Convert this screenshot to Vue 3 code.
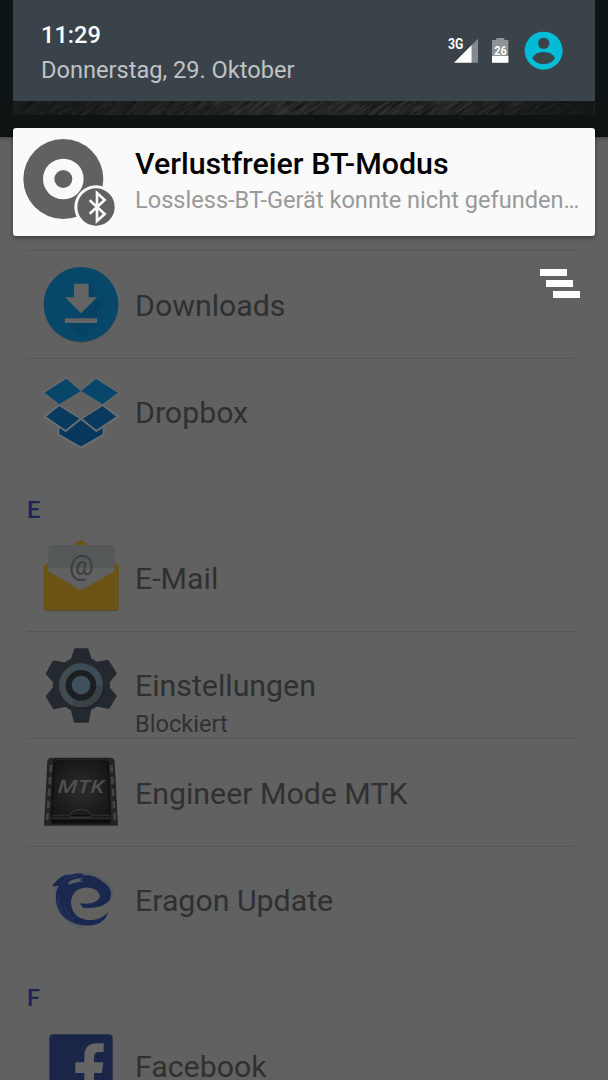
<script setup>
import { ref } from 'vue'

const time = ref('11:29')
const date = ref('Donnerstag, 29. Oktober')

const notification = {
  title: 'Verlustfreier BT-Modus',
  text: 'Lossless-BT-Gerät konnte nicht gefunden werden'
}

const sections = [
  {
    letter: '',
    apps: [
      { name: 'Downloads', icon: 'downloads' },
      { name: 'Dropbox', icon: 'dropbox' }
    ]
  },
  {
    letter: 'E',
    apps: [
      { name: 'E-Mail', icon: 'mail' },
      { name: 'Einstellungen', icon: 'settings', note: 'Blockiert' },
      { name: 'Engineer Mode MTK', icon: 'mtk' },
      { name: 'Eragon Update', icon: 'eragon' }
    ]
  },
  {
    letter: 'F',
    apps: [{ name: 'Facebook', icon: 'facebook' }]
  }
]
</script>

<template>
  <div class="screen">
    <div class="app-bar"></div>

    <main class="app-list">
      <section v-for="section in sections" :key="section.letter" class="section">
        <h2 v-if="section.letter" class="letter">{{ section.letter }}</h2>
        <div v-for="app in section.apps" :key="app.name" class="row">
          <svg v-if="app.icon === 'downloads'" class="app-icon" viewBox="60 30 240 240">
            <circle cx="183" cy="151" r="112" fill="#4b4e50" />
            <circle cx="183" cy="148" r="112" fill="#07476a" />
            <path d="M207 86 229 108 229 127 247 145 231 161 231 190 231 204 190 245 135 204 184 175Z" fill="#074264" />
            <path d="M162 86H206V127H231L183 175 135 127H162ZM135 190H231V204H135Z" fill="#646464" />
          </svg>

          <svg v-else-if="app.icon === 'dropbox'" class="app-icon" viewBox="60 23 240 240">
            <g stroke="#6c6e70" stroke-width="6" stroke-linejoin="round">
              <path d="M115 180 183 150 251 180V208L183 247 115 208Z" fill="#08375d" />
              <path d="M139 40 183 77 118 117 73 82ZM228 40 294 82 248 117 183 77Z" fill="#08466a" />
              <path d="M118 119 183 160 137 197 73 154ZM248 119 294 154 229 197 183 160Z" fill="#083a5f" />
            </g>
            <path d="M139 40 183 77 118 117 73 82ZM228 40 294 82 248 117 183 77Z" fill="#08466a" />
            <path d="M183 79 247 118 183 158 119 118Z" fill="#616161" />
          </svg>

          <svg v-else-if="app.icon === 'mail'" class="app-icon" viewBox="60 144 240 240">
            <path d="M71 230H296V354Q296 364 286 364H81Q71 364 71 354Z" fill="#4d4b45" />
            <path d="M157 168 176 153Q183 148 190 153L210 168 288 222Q296 226 296 232V351Q296 361 286 361H81Q71 361 71 351V232Q71 226 79 222Z" fill="#6b5316" />
            <path d="M85 177Q85 165 97 165H271Q283 165 283 177V244L183 301 85 244Z" fill="#545858" />
            <path d="M85 234H283V244L183 301 85 244Z" fill="#616161" />
            <text x="147" y="256" textLength="74" lengthAdjust="spacingAndGlyphs" class="at">@</text>
          </svg>

          <svg v-else-if="app.icon === 'settings'" class="app-icon" viewBox="60 33 240 240">
            <path class="gear-shadow" d="M165 42H203L212 74 231 84 266 78 290 118 269 142V160L290 183 267 222 231 214 212 226 206 264H162L153 226 137 215 101 222 78 184 101 158V142L78 118 99 80 134 85 153 75Z" />
            <path class="gear" d="M165 42H203L212 72 231 83 264 77 288 115 267 140V159L288 183 266 219 231 212 211 223 204 260H164L155 224 137 213 101 220 80 184 101 158V140L80 116 100 79 135 85 155 73Z" />
            <circle cx="187" cy="155" r="66" fill="#1f2327" />
            <circle cx="183" cy="151" r="66" fill="#414b50" />
            <path d="M183 151 150 94A66 66 0 0 1 249 151Z" fill="#3d4d58" />
            <path d="M183 151 249 151A66 66 0 0 1 155 210Z" fill="#3b4245" />
            <circle cx="183" cy="151" r="46" fill="#1c1f22" />
            <circle cx="183" cy="150" r="28" fill="#3e515c" />
          </svg>

          <svg v-else-if="app.icon === 'mtk'" class="app-icon" viewBox="60 24 240 240">
            <defs>
              <radialGradient id="lid" cx=".5" cy=".55" r=".7">
                <stop offset="0" stop-color="#2c2c2c" />
                <stop offset="1" stop-color="#121212" />
              </radialGradient>
            </defs>
            <path d="M82 48Q84 38 96 38H270Q282 38 284 48L294 242H72Z" fill="#242424" />
            <path d="M93 60 81 236M274 60 285 236" stroke="#444" stroke-width="8" stroke-dasharray="22 14" fill="none" />
            <path d="M102 54Q102 41 115 41H251Q263 41 264 54L270 212H95Z" fill="url(#lid)" stroke="#0d0d0d" stroke-width="4" />
            <path d="M106 50Q107 42 116 42H250Q259 42 261 50" stroke="#404040" stroke-width="2" fill="none" />
            <path d="M94 213H272V238H94Z" fill="#171717" />
            <path d="M96 211H149Q155 194 182 193 207 194 214 211H270M96 219H270M149 211Q152 217 160 217H204Q211 217 214 211" stroke="#454545" stroke-width="2" fill="none" />
            <path d="M94 229H272" stroke="#0c0c0c" stroke-width="8" />
            <text x="112" y="143" textLength="140" lengthAdjust="spacingAndGlyphs" class="mtk">MTK</text>
          </svg>

          <svg v-else-if="app.icon === 'eragon'" class="app-icon" viewBox="60 18 240 240">
            <path d="M102 84C130 48 222 36 266 84 284 110 286 130 264 142L240 100 160 84 140 140 190 222C150 218 100 180 104 112Z" fill="#565b60" />
            <path d="M96 94C112 70 130 60 146 57L138 64C160 54 180 54 194 57L184 62C210 58 232 66 244 78 262 88 272 100 272 112 276 134 262 146 246 152 228 159 206 159 190 159L179 145C214 150 237 140 240 124 238 102 206 90 178 102 144 118 147 165 174 185 205 203 246 196 264 170 258 206 216 218 180 209 130 200 105 165 108 118Q110 102 117 93Z" fill="#1a2850" />
            <path d="M146 82C156 72 176 69 190 70L178 76 194 79C178 80 160 84 146 90Z" fill="#5a5d62" />
            <path d="M122 84C140 68 158 64 172 65M114 120C112 155 130 186 160 201M134 150C138 170 148 184 162 193" stroke="#3a4462" stroke-width="2" fill="none" />
          </svg>

          <svg v-else class="app-icon" viewBox="60 138 240 240">
            <rect x="88" y="163" width="190" height="210" rx="12" fill="#1b2548" />
            <path d="M193 373V279H166V247H193V229Q193 190 231 190H251V216H238Q222 216 222 232V247H250L246 279H222V373Z" fill="#656565" />
          </svg>

          <div class="labels">
            <div class="name">{{ app.name }}</div>
            <div v-if="app.note" class="note">{{ app.note }}</div>
          </div>
        </div>
      </section>
    </main>

    <div class="shade">
      <header class="status">
        <div class="clock">
          <div class="time">{{ time }}</div>
          <div class="date">{{ date }}</div>
        </div>
        <svg class="signal" viewBox="81 93 99 117">
          <path d="M155 135 174 116V188H155Z" fill="#84898d" />
          <path d="M102 188 155 135V188Z" fill="#fff" />
          <text x="84" y="148" textLength="46" lengthAdjust="spacingAndGlyphs" class="net">3G</text>
        </svg>
        <svg class="battery" viewBox="210 93 60 117">
          <path d="M229 114H253V120H265V188H216V120H229Z" fill="#8f9396" />
          <path d="M216 168H265V188H216Z" fill="#fff" />
          <text x="223" y="165" textLength="37" lengthAdjust="spacingAndGlyphs" class="level">26</text>
        </svg>
        <svg class="avatar" viewBox="312 93 120 117">
          <circle cx="371" cy="152" r="57" fill="#00bcd4" />
          <circle cx="371" cy="130" r="17" fill="#3b434a" />
          <path d="M337 174Q346 156 371 156T405 174Q395 192 371 192T337 174Z" fill="#3b434a" />
        </svg>
      </header>

      <svg class="texture" viewBox="0 0 581 14" preserveAspectRatio="none">
        <defs>
          <filter id="grain" x="0" y="0" width="100%" height="100%" color-interpolation-filters="sRGB">
            <feTurbulence type="fractalNoise" baseFrequency=".05 .4" numOctaves="4" seed="6" />
            <feColorMatrix values=".22 0 0 0 .03  .22 0 0 0 .035  .22 0 0 0 .035  0 0 0 0 1" />
          </filter>
          <linearGradient id="edges">
            <stop offset="0" stop-color="#0e1314" stop-opacity=".6" />
            <stop offset=".4" stop-color="#0e1314" stop-opacity="0" />
            <stop offset=".75" stop-color="#0e1314" stop-opacity="0" />
            <stop offset="1" stop-color="#0e1314" stop-opacity=".8" />
          </linearGradient>
        </defs>
        <g transform="rotate(-35 290 7)">
          <rect x="-10" y="-240" width="620" height="500" filter="url(#grain)" />
        </g>
        <rect width="581" height="14" fill="url(#edges)" />
      </svg>

      <article class="card">
        <svg class="card-icon" viewBox="60 39 300 300">
          <circle cx="190" cy="177" r="120" fill="#616161" />
          <circle cx="190" cy="177" r="61" fill="#fafafa" />
          <circle cx="190" cy="177" r="27" fill="#616161" />
          <circle cx="288" cy="261" r="65" fill="#fafafa" />
          <circle cx="288" cy="261" r="56" fill="#616161" />
          <path d="M269 241 314 282 291 303V219L314 240 269 281" fill="none" stroke="#fafafa" stroke-width="8" />
        </svg>
        <div class="card-body">
          <div class="card-title">{{ notification.title }}</div>
          <div class="card-text">{{ notification.text }}</div>
        </div>
      </article>

      <button class="clear" aria-label="Alle löschen">
        <span></span>
        <span></span>
        <span></span>
      </button>
    </div>
  </div>
</template>

<style>
body {
  margin: 0;
  background: #616161;
}
</style>

<style scoped>
.screen {
  position: relative;
  height: 1080px;
  overflow: hidden;
  background: #616161;
  font-family: Roboto, "Noto Sans", sans-serif;
}

.app-bar {
  height: 137px;
  background: #0e1314;
  box-shadow: 0 1px 4px rgba(0, 0, 0, 0.35);
}

.app-list {
  margin: 113px 34px 0 27px;
  border-top: 1px solid #555;
}

.letter {
  margin: 0;
  height: 58px;
  padding-top: 30px;
  box-sizing: border-box;
  font-size: 23.6px;
  line-height: 28px;
  font-weight: 500;
  color: #1b2452;
}

.row {
  display: flex;
  align-items: center;
  height: 107.5px;
  padding-left: 13px;
  box-sizing: border-box;
  border-bottom: 1px solid #555;
}

.row:last-child {
  border-bottom-color: transparent;
}

.app-icon {
  flex: none;
  width: 80px;
  height: 80px;
  margin-top: 2px;
}

.labels {
  align-self: flex-start;
  padding: 36.6px 0 0 15px;
}

.name {
  font-size: 30.3px;
  line-height: 36px;
  color: #2e3031;
}

.note {
  margin-top: 8px;
  font-size: 23.6px;
  line-height: 24px;
  color: #2e3031;
}

.at {
  font-size: 84px;
  fill: #3a3d3d;
}

.gear {
  fill: #24292f;
  stroke: #24292f;
  stroke-width: 5;
  stroke-linejoin: round;
}

.gear-shadow {
  fill: #494949;
}

.mtk {
  font-family: "Open Sans", sans-serif;
  font-size: 56px;
  font-weight: 600;
  font-style: italic;
  fill: #505050;
}

.shade {
  position: absolute;
  top: 0;
  left: 13.4px;
  right: 13.4px;
}

.status {
  display: flex;
  align-items: flex-start;
  height: 101px;
  padding: 0 30.6px 0 27.6px;
  box-sizing: border-box;
  background: #3b434a;
}

.clock {
  flex: 1;
  padding-top: 21px;
}

.time {
  font-size: 23.6px;
  line-height: 28px;
  font-weight: 500;
  color: #fff;
}

.date {
  margin-top: 7px;
  font-size: 23.6px;
  line-height: 28px;
  color: #c0c2c4;
}

.signal,
.battery,
.avatar {
  height: 39px;
  margin-top: 31px;
}

.signal {
  width: 33px;
}

.battery {
  width: 20px;
  margin-left: 10px;
}

.avatar {
  width: 40px;
  margin-left: 14px;
}

.net,
.level {
  font-weight: bold;
  fill: #fff;
}

.net {
  font-size: 42px;
}

.level {
  font-size: 37px;
}

.texture {
  display: block;
  width: 100%;
  height: 14px;
  overflow: hidden;
}

.card {
  display: flex;
  height: 108px;
  margin-top: 13px;
  background: #fafafa;
  border-radius: 3px;
  box-shadow: 0 2px 4px rgba(0, 0, 0, 0.4);
}

.card-icon {
  flex: none;
  width: 100px;
  height: 100px;
  margin: 5px 0 0 6.6px;
}

.card-body {
  flex: 1;
  min-width: 0;
  padding: 18px 11px 0 15px;
}

.card-title {
  font-size: 30.4px;
  line-height: 36px;
  font-weight: 500;
  color: #000;
}

.card-text {
  margin-top: 4px;
  font-size: 23.6px;
  line-height: 28px;
  color: #999;
  white-space: nowrap;
  overflow: hidden;
  text-overflow: ellipsis;
}

.clear {
  display: flex;
  flex-direction: column;
  gap: 3.5px;
  width: 40px;
  margin: 33px 15px 0 auto;
  padding: 0;
  border: 0;
  background: none;
}

.clear span {
  width: 27px;
  height: 7.4px;
  background: #fff;
}

.clear span:nth-child(2) {
  align-self: center;
}

.clear span:nth-child(3) {
  align-self: flex-end;
}
</style>
